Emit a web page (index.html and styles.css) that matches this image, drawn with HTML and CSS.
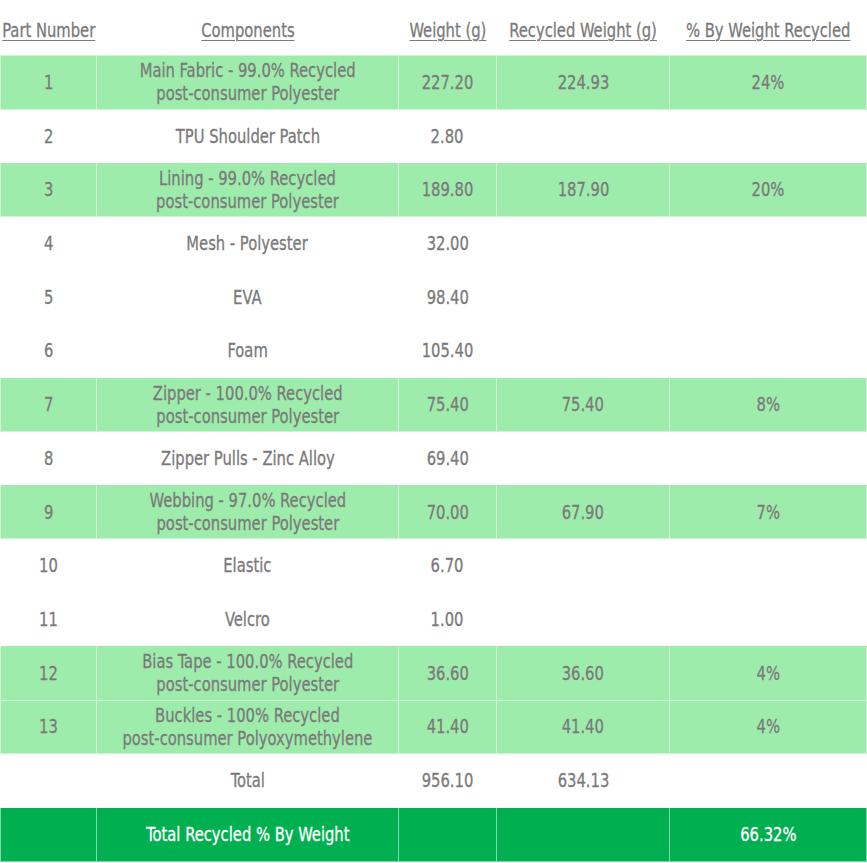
FILE: index.html
```html
<!DOCTYPE html>
<html>
<head>
<meta charset="utf-8">
<link rel="stylesheet" href="styles.css">
</head>
<body>
<table class="tbl">
  <colgroup>
    <col class="c1"><col class="c2"><col class="c3"><col class="c4"><col class="c5">
  </colgroup>
  <thead>
    <tr class="head">
      <th><span class="t u">Part Number</span></th>
      <th><span class="t u">Components</span></th>
      <th><span class="t u">Weight (g)</span></th>
      <th><span class="t u">Recycled Weight (g)</span></th>
      <th><span class="t u">% By Weight Recycled</span></th>
    </tr>
  </thead>
  <tbody>
    <tr class="g"><td><span class="t">1</span></td><td><span class="t">Main Fabric - 99.0% Recycled<br>post-consumer Polyester</span></td><td><span class="t">227.20</span></td><td><span class="t">224.93</span></td><td><span class="t">24%</span></td></tr>
    <tr><td><span class="t">2</span></td><td><span class="t">TPU Shoulder Patch</span></td><td><span class="t">2.80</span></td><td></td><td></td></tr>
    <tr class="g"><td><span class="t">3</span></td><td><span class="t">Lining - 99.0% Recycled<br>post-consumer Polyester</span></td><td><span class="t">189.80</span></td><td><span class="t">187.90</span></td><td><span class="t">20%</span></td></tr>
    <tr><td><span class="t">4</span></td><td><span class="t">Mesh - Polyester</span></td><td><span class="t">32.00</span></td><td></td><td></td></tr>
    <tr><td><span class="t">5</span></td><td><span class="t">EVA</span></td><td><span class="t">98.40</span></td><td></td><td></td></tr>
    <tr><td><span class="t">6</span></td><td><span class="t">Foam</span></td><td><span class="t">105.40</span></td><td></td><td></td></tr>
    <tr class="g"><td><span class="t">7</span></td><td><span class="t">Zipper - 100.0% Recycled<br>post-consumer Polyester</span></td><td><span class="t">75.40</span></td><td><span class="t">75.40</span></td><td><span class="t">8%</span></td></tr>
    <tr><td><span class="t">8</span></td><td><span class="t">Zipper Pulls - Zinc Alloy</span></td><td><span class="t">69.40</span></td><td></td><td></td></tr>
    <tr class="g"><td><span class="t">9</span></td><td><span class="t">Webbing - 97.0% Recycled<br>post-consumer Polyester</span></td><td><span class="t">70.00</span></td><td><span class="t">67.90</span></td><td><span class="t">7%</span></td></tr>
    <tr><td><span class="t">10</span></td><td><span class="t">Elastic</span></td><td><span class="t">6.70</span></td><td></td><td></td></tr>
    <tr><td><span class="t">11</span></td><td><span class="t">Velcro</span></td><td><span class="t">1.00</span></td><td></td><td></td></tr>
    <tr class="g"><td><span class="t">12</span></td><td><span class="t">Bias Tape - 100.0% Recycled<br>post-consumer Polyester</span></td><td><span class="t">36.60</span></td><td><span class="t">36.60</span></td><td><span class="t">4%</span></td></tr>
    <tr class="g"><td><span class="t">13</span></td><td><span class="t">Buckles - 100% Recycled<br>post-consumer Polyoxymethylene</span></td><td><span class="t">41.40</span></td><td><span class="t">41.40</span></td><td><span class="t">4%</span></td></tr>
    <tr><td></td><td><span class="t">Total</span></td><td><span class="t">956.10</span></td><td><span class="t">634.13</span></td><td></td></tr>
    <tr class="dg"><td></td><td><span class="t">Total Recycled % By Weight</span></td><td></td><td></td><td><span class="t">66.32%</span></td></tr>
  </tbody>
</table>
</body>
</html>
```
FILE: styles.css
```css
html, body {
  margin: 0;
  padding: 0;
  background: #ffffff;
}
.tbl {
  border-collapse: collapse;
  width: 866px;
  table-layout: fixed;
  font-family: "DejaVu Sans Condensed", "DejaVu Sans", sans-serif;
  font-stretch: condensed;
  font-size: 20px;
  color: #7a7a7a;
}
.c1 { width: 96px; }
.c2 { width: 302px; }
.c3 { width: 98px; }
.c4 { width: 173px; }
.c5 { width: 197px; }
.t {
  display: inline-block;
  white-space: nowrap;
  margin: 0 -40px;
  transform: scaleX(0.82);
  transform-origin: center;
  -webkit-text-stroke: 0.3px currentColor;
}
.tbl th {
  height: 51px;
  padding: 4px 0 0;
  font-weight: normal;
  text-align: center;
  vertical-align: middle;
  border: none;
}
.u {
  text-decoration: underline;
  text-decoration-thickness: 1px;
  text-underline-offset: 3px;
}
.tbl td {
  height: 52.73px;
  padding: 0;
  text-align: center;
  vertical-align: middle;
  line-height: 23px;
  border: 1px solid transparent;
}
.tbl tr.g td {
  background: #9eecab;
  border: 1px solid #cdf5d3;
}
.tbl tr.dg td {
  background: #00b050;
  color: #ffffff;
  border: 1px solid #7fd6a6;
}
```
